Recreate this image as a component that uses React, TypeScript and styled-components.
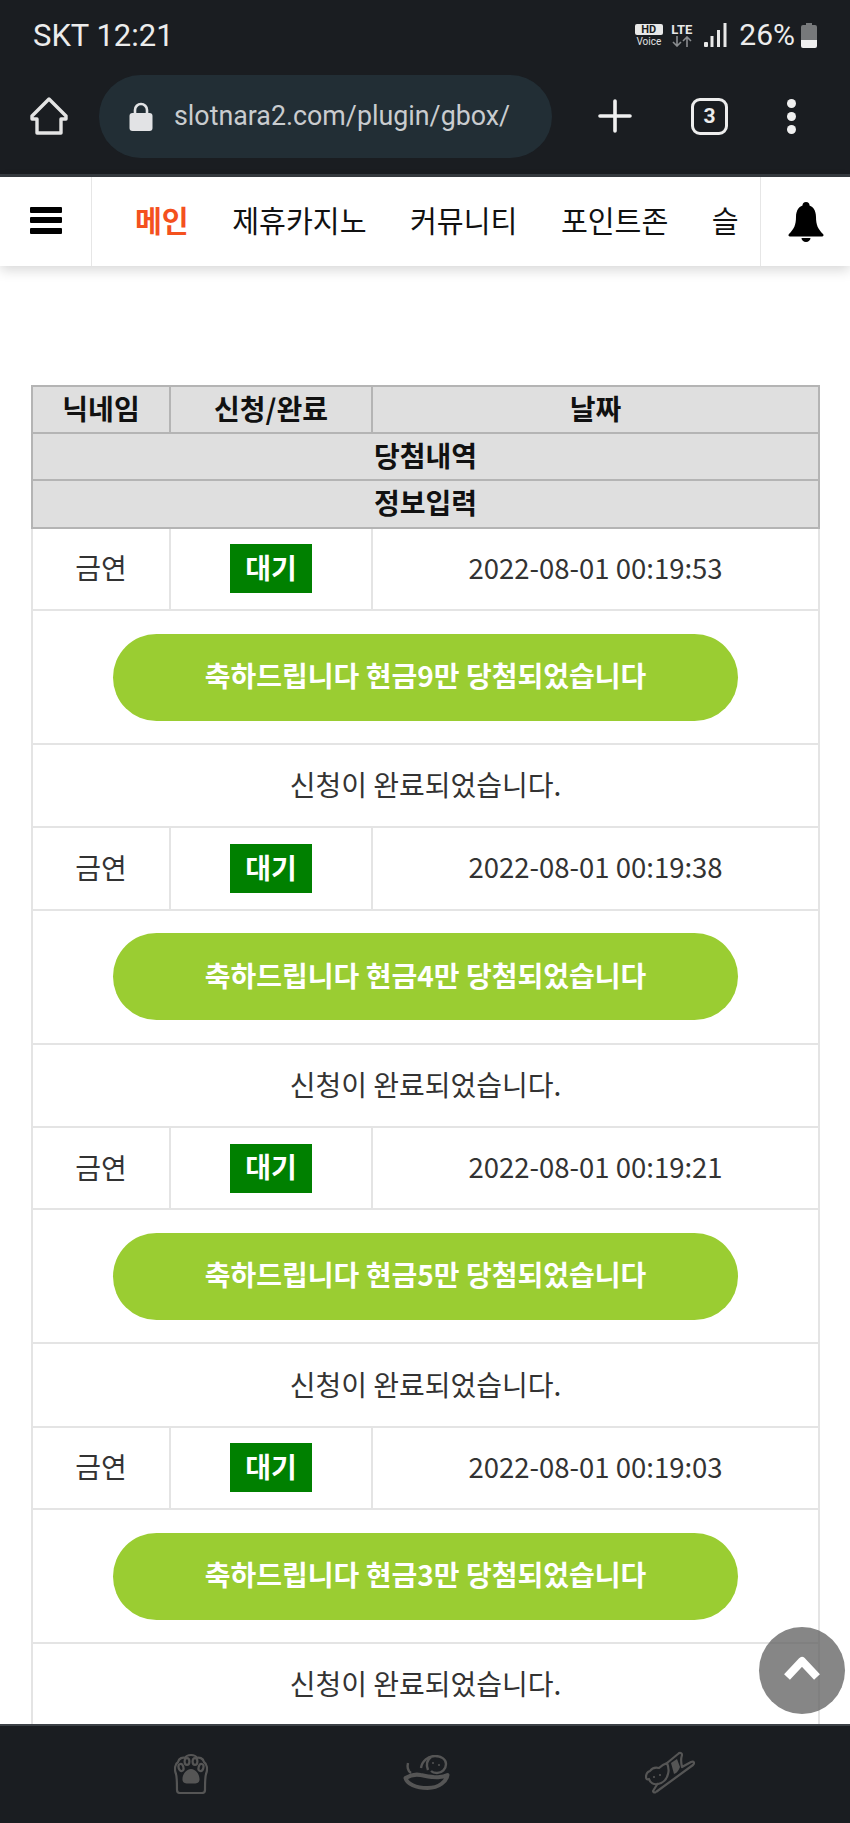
import styled, { createGlobalStyle } from "styled-components";

const wins = [
  { date: "2022-08-01 00:19:53", prize: "9" },
  { date: "2022-08-01 00:19:38", prize: "4" },
  { date: "2022-08-01 00:19:21", prize: "5" },
  { date: "2022-08-01 00:19:03", prize: "3" },
];

const menus = ["제휴카지노", "커뮤니티", "포인트존", "슬"];

function App() {
  return (
    <Page>
      <GlobalStyle />
      <Chrome>
        <StatusBar>
          <Carrier>SKT 12:21</Carrier>
          <StatusRight>
            <HdBlock>
              <HdBox>HD</HdBox>
              <VoiceText>Voice</VoiceText>
            </HdBlock>
            <LteBlock>
              <LteText>LTE</LteText>
              <svg width="22" height="11" viewBox="0 0 22 11" fill="none" stroke="#8a8d90" strokeWidth="1.6">
                <path d="M6 0v10M2 6l4 4 4-4M16 11V1M12 5l4-4 4 4" />
              </svg>
            </LteBlock>
            <svg width="23" height="24" viewBox="0 0 23 24" fill="#e8e8e8">
              <rect x="0" y="19" width="4" height="5" rx="1" />
              <rect x="6.5" y="13" width="3" height="11" />
              <rect x="13" y="7" width="3" height="17" />
              <rect x="19.5" y="0" width="3" height="24" />
            </svg>
            <Percent>26%</Percent>
            <svg width="16" height="25" viewBox="0 0 16 25">
              <path d="M5 0h6v2h3a2 2 0 0 1 2 2v13H0V4a2 2 0 0 1 2-2h3z" fill="#77797b" />
              <path d="M0 17h16v6a2 2 0 0 1-2 2H2a2 2 0 0 1-2-2z" fill="#efefef" />
            </svg>
          </StatusRight>
        </StatusBar>
        <ToolBar>
          <svg width="38" height="38" viewBox="0 0 38 38" fill="none" stroke="#e4e4e4" strokeWidth="3.4" strokeLinejoin="round">
            <path d="M19 2 2 19v3h5v14h24V22h5v-3z" />
          </svg>
          <UrlPill>
            <svg width="24" height="29" viewBox="0 0 24 29">
              <path d="M6 12V8a6 6 0 0 1 12 0v4" fill="none" stroke="#e2e3e5" strokeWidth="2.6" />
              <rect x="0.5" y="11" width="23" height="18" rx="3" fill="#e2e3e5" />
            </svg>
            <UrlText>slotnara2.com/plugin/gbox/</UrlText>
          </UrlPill>
          <ToolIcons>
            <svg width="34" height="34" viewBox="0 0 34 34" stroke="#f0f0f0" strokeWidth="3.6" strokeLinecap="round">
              <path d="M17 2v30M2 17h30" />
            </svg>
            <TabCount>3</TabCount>
            <Dots>
              <i />
              <i />
              <i />
            </Dots>
          </ToolIcons>
        </ToolBar>
      </Chrome>
      <Nav>
        <Burger>
          <i />
          <i />
          <i />
        </Burger>
        <MenuList>
          <MenuItem $active>메인</MenuItem>
          {menus.map((menu) => (
            <MenuItem key={menu}>{menu}</MenuItem>
          ))}
        </MenuList>
        <BellBox>
          <svg width="36" height="40" viewBox="0 0 36 40" fill="#000">
            <circle cx="18" cy="3.5" r="3.5" />
            <path d="M18 3c7 0 10 5.500 10 12 0 8 2 12 7 17 1 1 .5 2.500-1 2.500H2c-1.500 0-2-1.500-1-2.500 5-5 7-9 7-17C8 8.500 11 3 18 3z" />
            <path d="M13.500 36h9a4.500 4 0 0 1-9 0z" />
          </svg>
        </BellBox>
      </Nav>
      <Content>
        <WinTable>
          <colgroup>
            <col width="138" />
            <col width="202" />
            <col />
          </colgroup>
          <thead>
            <tr>
              <HeadCell>닉네임</HeadCell>
              <HeadCell>신청/완료</HeadCell>
              <HeadCell>날짜</HeadCell>
            </tr>
            <tr>
              <HeadCell colSpan={3}>당첨내역</HeadCell>
            </tr>
            <tr>
              <HeadCell colSpan={3}>정보입력</HeadCell>
            </tr>
          </thead>
          <tbody>
            {wins.map((win) => (
              <WinRows key={win.date} date={win.date} prize={win.prize} />
            ))}
          </tbody>
        </WinTable>
      </Content>
      <TopButton>
        <svg width="38" height="26" viewBox="0 0 38 26" fill="none" stroke="#fff" strokeWidth="8" strokeLinejoin="round">
          <path d="M4 21 19 5l15 16" />
        </svg>
      </TopButton>
      <BottomBar>
        <svg width="34" height="42" viewBox="0 0 34 42" fill="none" stroke="#555" strokeWidth="2.2">
          <path d="M2 22C0 17 1 12 4 10c1-4 5-5 7-4 2-4 10-4 12 0 2-1 6 0 7 4 3 2 4 7 2 12-1 3-1 9-1 16a3 3 0 0 1-3 3H6a3 3 0 0 1-3-3c0-7 0-13-1-16z" />
          <ellipse cx="7" cy="15.500" rx="2.400" ry="3.600" transform="rotate(-15 7 15.500)" />
          <ellipse cx="13" cy="9.500" rx="2.400" ry="3.400" />
          <ellipse cx="21" cy="9.500" rx="2.400" ry="3.400" />
          <ellipse cx="27" cy="15.500" rx="2.400" ry="3.600" transform="rotate(15 27 15.500)" />
          <path d="M17 17c5 0 9 6 8.500 11-.5 4-5 3.500-8.500 3.500S9 32 8.500 28C8 23 12 17 17 17z" fill="#555" stroke="none" />
        </svg>
        <svg width="47" height="36" viewBox="0 0 47 36" fill="none" stroke="#555" strokeWidth="2.4" strokeLinejoin="round">
          <path d="M5 8c-1 4 0 8 3 10" />
          <path d="M18 13c1-7 7-12 14-12 6 0 11 3 11 8 0 5-4 9-9 9-2 0-5-1-6-2" />
          <path d="M28 2c-4 3-5 8-3 13" />
          <circle cx="30" cy="8" r="1" fill="#555" stroke="none" />
          <circle cx="36" cy="10" r="1" fill="#555" stroke="none" />
          <path d="M2.500 23c5-3 10-4 15-3 6 1 14 3 19 2 3 0 6-1 8-2-1 6-8 13-20 13C13 33 4 29 2.500 23z" strokeWidth="4" />
        </svg>
        <svg width="50" height="43" viewBox="0 0 50 43" fill="none" stroke="#555" strokeWidth="2.2" strokeLinejoin="round">
          <path d="M11 41 48 14c2-2 1-4-2-3l-9 5c-1-4-1-9 0-12 0-2-2-3-4-1L22 12" />
          <path d="M11 41c-2 1-3 0-3-1l5-8" />
          <path d="M22 12c-3 1-6 3-8 5-4-1-7 0-9 3-3 1-4 4-4 6 0 2 1 3 3 2 1 4 5 6 9 5 5-1 9-5 10-10 1-3 1-6-1-11z" />
          <path d="M26 12c2-1 4-3 6-4l3 8c-1 3-3 6-6 7-1-4-2-7-3-11z" fill="#555" stroke="none" />
          <circle cx="9" cy="26" r="1.100" fill="#555" stroke="none" />
          <circle cx="15" cy="24" r="1.100" fill="#555" stroke="none" />
        </svg>
      </BottomBar>
    </Page>
  );
}

function WinRows({ date, prize }: { date: string; prize: string }) {
  return (
    <>
      <InfoRow>
        <BodyCell>금연</BodyCell>
        <BadgeCell>
          <StateBadge>대기</StateBadge>
        </BadgeCell>
        <DateCell>{date}</DateCell>
      </InfoRow>
      <PrizeRow>
        <BadgeCell colSpan={3}>
          <PrizeButton>축하드립니다 현금{prize}만 당첨되었습니다</PrizeButton>
        </BadgeCell>
      </PrizeRow>
      <MessageRow>
        <BodyCell colSpan={3}>신청이 완료되었습니다.</BodyCell>
      </MessageRow>
    </>
  );
}

export default App;

const GlobalStyle = createGlobalStyle`
  html, body {
    margin: 0;
    padding: 0;
    height: 100%;
    overflow: hidden;
    background: #fff;
  }
  * {
    box-sizing: border-box;
  }
`;

const Page = styled.div`
  position: relative;
  display: flex;
  flex-direction: column;
  width: 850px;
  height: 1823px;
  overflow: hidden;
  font-family: "Noto Sans CJK KR", "Noto Sans", sans-serif;
`;

const Chrome = styled.header`
  height: 177px;
  background: #1a1d21;
  border-bottom: 3px solid #363b40;
`;

const StatusBar = styled.div`
  display: flex;
  justify-content: space-between;
  align-items: center;
  height: 70px;
  padding: 0 33px;
`;

const Carrier = styled.span`
  font-family: Roboto, sans-serif;
  font-size: 31px;
  color: #ececec;
`;

const StatusRight = styled.div`
  display: flex;
  align-items: center;
  gap: 6px;
`;

const HdBlock = styled.div`
  display: flex;
  flex-direction: column;
  align-items: center;
  width: 29px;
`;

const HdBox = styled.span`
  width: 28px;
  height: 11px;
  border-radius: 2px;
  background: #e8e8e8;
  color: #1a1d21;
  font-family: Roboto, sans-serif;
  font-size: 11px;
  font-weight: 700;
  line-height: 11px;
  text-align: center;
`;

const VoiceText = styled.span`
  margin-top: 2px;
  font-family: Roboto, sans-serif;
  font-size: 10px;
  line-height: 10px;
  color: #e0e0e0;
`;

const LteBlock = styled.div`
  display: flex;
  flex-direction: column;
  align-items: center;
  width: 25px;
  margin-right: 4px;
`;

const LteText = styled.span`
  font-family: Roboto, sans-serif;
  font-size: 13px;
  font-weight: 700;
  line-height: 13px;
  color: #e8e8e8;
`;

const Percent = styled.span`
  margin-left: 6px;
  font-family: Roboto, sans-serif;
  font-size: 30px;
  line-height: 30px;
  color: #ececec;
`;

const ToolBar = styled.div`
  display: flex;
  align-items: center;
  height: 104px;
  padding: 0 0 12px 30px;
`;

const UrlPill = styled.div`
  display: flex;
  align-items: center;
  gap: 21px;
  width: 453px;
  height: 83px;
  margin-left: 31px;
  padding-left: 30px;
  border-radius: 42px;
  background: #222e35;
`;

const UrlText = styled.span`
  font-family: Roboto, sans-serif;
  font-size: 26.800px;
  color: #c9cccf;
`;

const ToolIcons = styled.div`
  display: flex;
  align-items: center;
  margin-left: 46px;
  gap: 59px;
`;

const TabCount = styled.span`
  display: flex;
  justify-content: center;
  align-items: center;
  width: 37px;
  height: 37px;
  border: 3.500px solid #ededed;
  border-radius: 9px;
  font-family: Roboto, sans-serif;
  font-size: 21px;
  font-weight: 700;
  color: #ededed;
`;

const Dots = styled.div`
  display: flex;
  flex-direction: column;
  gap: 4px;
  i {
    width: 9px;
    height: 9px;
    border-radius: 50%;
    background: #f0f0f0;
  }
`;

const Nav = styled.nav`
  position: relative;
  z-index: 1;
  display: flex;
  flex: none;
  height: 89px;
  background: #fff;
  box-shadow: 0 4px 12px rgba(0, 0, 0, 0.16);
`;

const Burger = styled.div`
  display: flex;
  flex: none;
  flex-direction: column;
  justify-content: center;
  gap: 4.500px;
  width: 92px;
  padding: 0 0 3px 30px;
  border-right: 1px solid #e6e6e6;
  i {
    width: 32px;
    height: 6px;
    border-radius: 1px;
    background: #000;
  }
`;

const MenuList = styled.div`
  display: flex;
  flex: 1;
  align-items: center;
  gap: 43.500px;
  padding-left: 43px;
  overflow: hidden;
`;

const MenuItem = styled.span<{ $active?: boolean }>`
  flex: none;
  font-size: 29.200px;
  font-weight: ${(p) => (p.$active ? 700 : 400)};
  color: ${(p) => (p.$active ? "#f4511e" : "#111")};
  line-height: 1;
  padding-bottom: 4px;
`;

const BellBox = styled.div`
  display: flex;
  flex: none;
  justify-content: center;
  align-items: center;
  width: 90px;
  border-left: 1px solid #e6e6e6;
`;

const Content = styled.main`
  flex: 1;
  min-height: 0;
  padding: 119px 30px 0 31px;
  overflow: hidden;
`;

const WinTable = styled.table`
  width: 789px;
  border-collapse: collapse;
  table-layout: fixed;
  font-size: 28px;
`;

const HeadCell = styled.th`
  height: 47.200px;
  padding: 0 0 4px;
  border: 2px solid #b4b4b4;
  background: #dfdfdf;
  color: #111;
  font-size: 28px;
  font-weight: 700;
  line-height: 1;
`;

const BodyCell = styled.td`
  padding: 0 0 3px;
  border: 2px solid #e4e4e4;
  color: #333;
  text-align: center;
  line-height: 1;
`;

const BadgeCell = styled(BodyCell)`
  padding: 0;
`;

const DateCell = styled(BodyCell)`
  font-size: 27.500px;
`;

const InfoRow = styled.tr`
  height: 82.500px;
`;

const PrizeRow = styled.tr`
  height: 134px;
`;

const MessageRow = styled.tr`
  height: 83.200px;
`;

const StateBadge = styled.span`
  display: inline-flex;
  justify-content: center;
  align-items: center;
  width: 82px;
  height: 49px;
  padding-bottom: 4px;
  background: #008000;
  color: #fff;
  font-weight: 700;
  vertical-align: middle;
`;

const PrizeButton = styled.span`
  display: inline-flex;
  justify-content: center;
  align-items: center;
  width: 625px;
  height: 87px;
  padding-bottom: 4px;
  border-radius: 44px;
  background: #9acd32;
  color: #fff;
  font-weight: 700;
  vertical-align: middle;
`;

const TopButton = styled.div`
  position: absolute;
  top: 1627px;
  left: 759px;
  z-index: 2;
  display: flex;
  justify-content: center;
  align-items: center;
  width: 86px;
  height: 87px;
  padding-bottom: 4px;
  border-radius: 50%;
  background: rgba(100, 100, 100, 0.78);
`;

const BottomBar = styled.footer`
  position: relative;
  z-index: 1;
  display: flex;
  flex: none;
  align-items: center;
  height: 99px;
  padding: 0 155px 4px 174px;
  justify-content: space-between;
  background: #1a1d21;
  border-top: 2px solid #3c4146;
`;
